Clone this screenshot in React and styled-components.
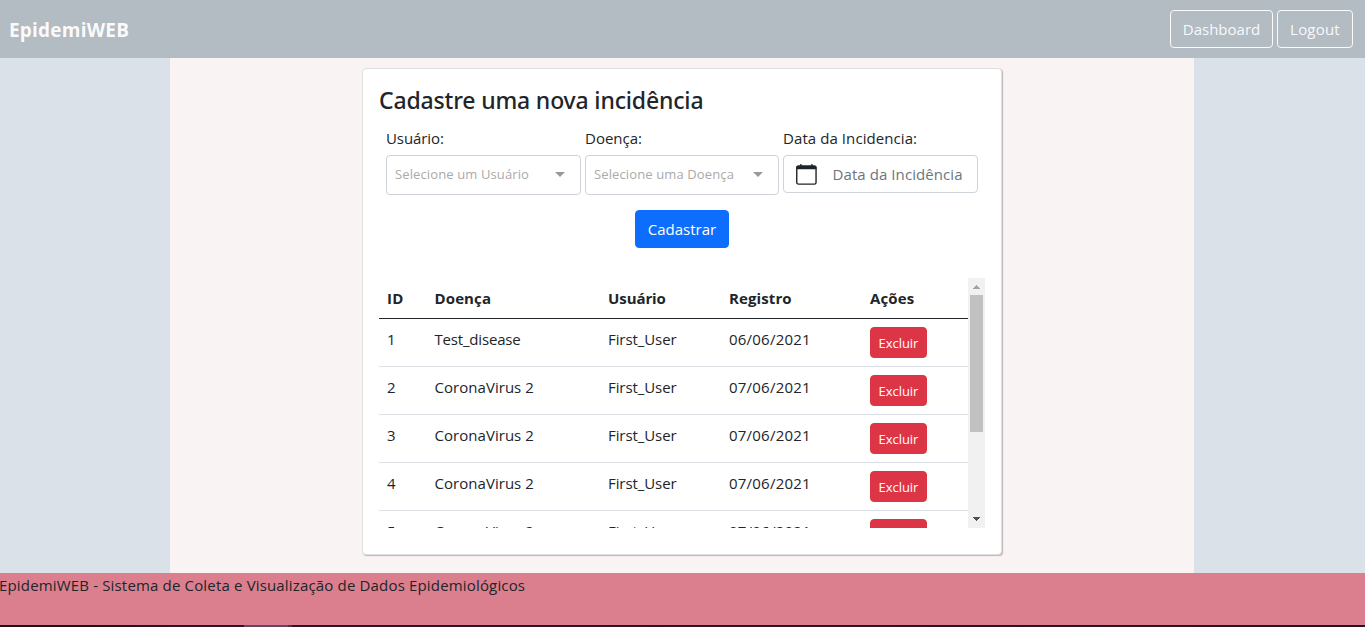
import React from "react";
import styled, { createGlobalStyle } from "styled-components";

const GlobalStyle = createGlobalStyle`
  *, *::before, *::after { box-sizing: border-box; }
  body {
    margin: 0;
    overflow: hidden;
    color: #212529;
    background: #dae1e8;
    font: 400 15px/24px "Open Sans", "Noto Sans", sans-serif;
  }
`;

const Page = styled.div`
  height: 627px;
  display: flex;
  flex-direction: column;
`;

const Header = styled.header`
  height: 58px;
  flex: none;
  display: flex;
  align-items: center;
  justify-content: space-between;
  padding: 0 12px 0 9px;
  background: #b3bbc3;
  color: #fafafa;
`;

const Brand = styled.div`
  padding-top: 2px;
  font-size: 19px;
  font-weight: 700;
  letter-spacing: 0.22px;
  line-height: 30px;
`;

const Nav = styled.nav`
  display: flex;
  gap: 4px;
`;

const Button = styled.button`
  width: ${(p) => p.$width}px;
  height: 38px;
  padding: 0;
  border: 1px solid ${(p) => p.$border || "#0d6efd"};
  border-radius: 4px;
  background: ${(p) => p.$bg || "#0d6efd"};
  color: ${(p) => p.$color || "#fff"};
  font: inherit;
  letter-spacing: ${(p) => p.$track || 0}px;
`;

const DeleteButton = styled(Button)`
  display: block;
  height: 31px;
  border-color: #dc3545;
  background: #dc3545;
  font-size: 13px;
  letter-spacing: -0.05px;
`;

const Main = styled.main`
  flex: 1;
  width: 1024px;
  margin-left: 170px;
  padding-top: 10px;
  background: #f9f3f3;
`;

const Card = styled.section`
  width: 640px;
  height: 487px;
  margin-left: 192px;
  padding: 17px 16px 0;
  display: flex;
  flex-direction: column;
  align-items: center;
  border: 1px solid #dfdfdf;
  border-radius: 4px;
  background: #fff;
  box-shadow: 1px 1px 1px rgba(0, 0, 0, 0.25);
`;

const Title = styled.h4`
  align-self: stretch;
  margin: 0 0 11px;
  font: 500 23px/29px "Noto Sans", sans-serif;
  letter-spacing: -0.16px;
`;

const Fields = styled.div`
  display: grid;
  grid-template-columns: 195px 194px 195px;
  gap: 4px;
  height: 84px;
  align-items: start;
`;

const Field = styled.div`
  display: flex;
  flex-direction: column;
  gap: 5px;
  letter-spacing: ${(p) => p.$track || 0}px;
`;

const Select = styled.div`
  height: 40px;
  padding: 0 15px 2px 8px;
  display: flex;
  align-items: center;
  justify-content: space-between;
  border: 1px solid #ced4da;
  border-radius: 4px;
  color: #aaa;
  font-size: 13px;
  letter-spacing: 0.12px;
`;

const Caret = styled.span`
  border: solid transparent;
  border-width: 5px 5px 0;
  border-top-color: #999;
`;

const DateInput = styled.div`
  height: 38px;
  padding-left: 11.5px;
  display: flex;
  align-items: center;
  gap: 16px;
  border: 1px solid #ced4da;
  border-radius: 4px;
  color: #6c757d;
  letter-spacing: 0.08px;
`;

const ScrollArea = styled.div`
  align-self: stretch;
  height: 250px;
  margin-top: 30px;
  display: flex;
  overflow: hidden;
`;

const Table = styled.div`
  width: 589px;
`;

const Row = styled.div`
  display: grid;
  grid-template-columns: 47.5px 173.5px 121px 141px 106px;
  height: ${(p) => (p.$head ? 41 : 48)}px;
  padding-top: 8px;
  border-bottom: 1px solid ${(p) => (p.$head ? "#212529" : "#dee2e6")};
  font-weight: ${(p) => (p.$head ? 700 : 400)};
`;

const Cell = styled.div`
  padding-left: 8px;
  letter-spacing: ${(p) => p.$track || 0}px;
`;

const Scrollbar = styled.div`
  width: 17px;
  height: 250px;
  display: flex;
  flex-direction: column;
  align-items: center;
  background: #f1f1f1;
`;

const Thumb = styled.div`
  width: 13px;
  height: 137px;
  margin-bottom: auto;
  background: #c1c1c1;
`;

const Footer = styled.footer`
  height: 52px;
  flex: none;
  margin-left: -1px;
  background: #db7f8e;
  letter-spacing: 0.165px;
`;

const Taskbar = styled.div`
  height: 2px;
  flex: none;
  display: flex;
  padding-left: 244px;
  background: linear-gradient(90deg, #1b1518 0, #1b1518 90px, #2b1630 180px, #2b1630 320px, #241525 100%);
`;

const ActiveTask = styled.div`
  width: 48px;
  border-right: 4px solid #47354f;
  background: #5d4868;
`;

const CalendarIcon = () => (
  <svg width="21" height="21" viewBox="0 0 21 21" fill="none">
    <rect x="0.75" y="2.1" width="19.3" height="18" rx="1.7" stroke="#212529" strokeWidth="1.4" />
    <path d="M0.4 5.2V3q0-1.6 1.6-1.6h16.8q1.6 0 1.6 1.6v2.2z" fill="#212529" />
    <path d="M4.9 0v2.5M15.9 0v2.5" stroke="#212529" strokeWidth="1.3" />
  </svg>
);

const ScrollArrow = ({ down }) => (
  <svg width="17" height="17" viewBox="0 0 17 17" shapeRendering="crispEdges">
    {down ? <path d="M5 6h7l-3.5 4z" fill="#505050" /> : <path d="M5 11h7l-3.5-4z" fill="#a3a3a3" />}
  </svg>
);

const records = [
  [1, "Test_disease", "06/06/2021"],
  [2, "CoronaVirus 2", "07/06/2021"],
  [3, "CoronaVirus 2", "07/06/2021"],
  [4, "CoronaVirus 2", "07/06/2021"],
  [5, "CoronaVirus 2", "07/06/2021"],
];

export default function App() {
  return (
    <Page>
      <GlobalStyle />
      <Header>
        <Brand>EpidemiWEB</Brand>
        <Nav>
          <Button $width={103} $bg="transparent" $border="#fafafa" $color="#f8f9fa">Dashboard</Button>
          <Button $width={76} $bg="transparent" $border="#fafafa" $color="#f8f9fa" $track={0.2}>Logout</Button>
        </Nav>
      </Header>
      <Main>
        <Card>
          <Title>Cadastre uma nova incidência</Title>
          <Fields>
            <Field $track={-0.08}>
              Usuário:
              <Select>Selecione um Usuário<Caret /></Select>
            </Field>
            <Field>
              Doença:
              <Select>Selecione uma Doença<Caret /></Select>
            </Field>
            <Field $track={0.08}>
              Data da Incidencia:
              <DateInput><CalendarIcon />Data da Incidência</DateInput>
            </Field>
          </Fields>
          <Button $width={94}>Cadastrar</Button>
          <ScrollArea>
            <Table>
              <Row $head>
                <Cell $track={0.4}>ID</Cell>
                <Cell $track={0.12}>Doença</Cell>
                <Cell $track={-0.08}>Usuário</Cell>
                <Cell $track={0.1}>Registro</Cell>
                <Cell $track={0.12}>Ações</Cell>
              </Row>
              {records.map(([id, disease, date]) => (
                <Row key={id}>
                  <Cell>{id}</Cell>
                  <Cell $track={id === 1 ? -0.18 : 0.04}>{disease}</Cell>
                  <Cell $track={-0.08}>First_User</Cell>
                  <Cell $track={0.22}>{date}</Cell>
                  <Cell><DeleteButton $width={57}>Excluir</DeleteButton></Cell>
                </Row>
              ))}
            </Table>
            <Scrollbar>
              <ScrollArrow />
              <Thumb />
              <ScrollArrow down />
            </Scrollbar>
          </ScrollArea>
        </Card>
      </Main>
      <Footer>EpidemiWEB - Sistema de Coleta e Visualização de Dados Epidemiológicos</Footer>
      <Taskbar><ActiveTask /></Taskbar>
    </Page>
  );
}
